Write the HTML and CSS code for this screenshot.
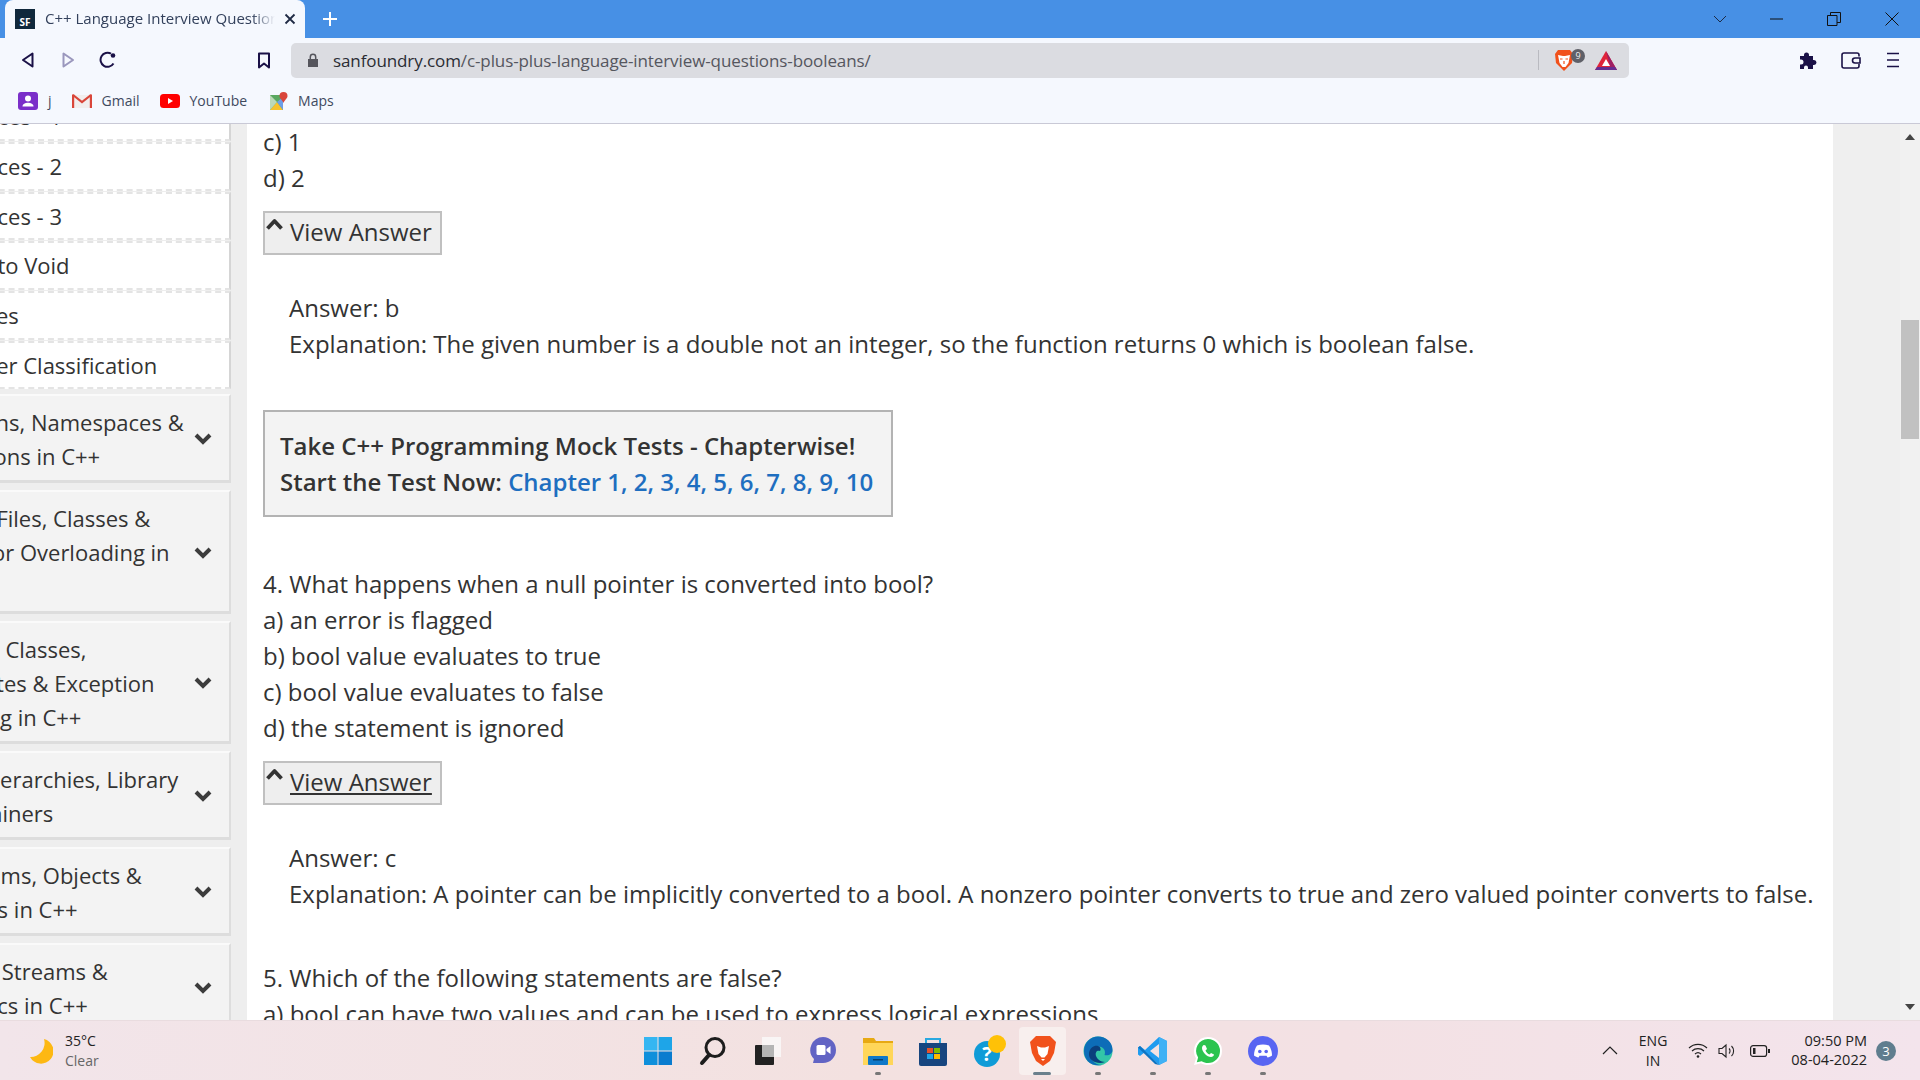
FILE: index.html
```html
<!DOCTYPE html>
<html>
<head>
    <title>C++ Language Interview Questions - Booleans</title>
    <link rel="stylesheet" href="styles.css">
</head>
<body>

<div class="tabbar">
    <div class="tab">
        <span class="favicon">SF</span>
        <span class="tab-title">C++ Language Interview Questions</span>
        <svg class="tab-close" width="12" height="12" viewBox="0 0 12 12"><path d="M1.5 1.5l9 9M10.5 1.5l-9 9" stroke="#1f2a44" stroke-width="1.8"/></svg>
    </div>
    <svg class="new-tab" width="16" height="16" viewBox="0 0 16 16"><path d="M8 1v14M1 8h14" stroke="#fff" stroke-width="2"/></svg>
    <div class="window-btns">
        <svg width="14" height="8" viewBox="0 0 14 8"><path d="M1 1l6 6 6-6" fill="none" stroke="#1c2b45" stroke-width="1"/></svg>
        <svg width="14" height="2" viewBox="0 0 14 2"><path d="M0 1h13" stroke="#111" stroke-width="1"/></svg>
        <svg width="14" height="14" viewBox="0 0 14 14"><path d="M.5 3.5h9.500v10h-9.500zM3.500 3.500v-3h10v10h-3.500" fill="none" stroke="#111" stroke-width="1"/></svg>
        <svg width="14" height="14" viewBox="0 0 14 14"><path d="M.5.5l13 13M13.500.5l-13 13" stroke="#111" stroke-width="1"/></svg>
    </div>
</div>

<div class="toolbar">
    <svg class="btn-back" width="14" height="16" viewBox="0 0 14 16"><path d="M11.500 1.500v13L2 8z" fill="none" stroke="#1a1147" stroke-width="2" stroke-linejoin="round"/></svg>
    <svg class="btn-forward" width="14" height="16" viewBox="0 0 14 16"><path d="M2.500 1.500v13L12 8z" fill="none" stroke="#9a97bd" stroke-width="2" stroke-linejoin="round"/></svg>
    <svg class="btn-reload" width="18" height="18" viewBox="0 0 18 18"><path d="M14.500 12.500A7 7 0 1 1 12 2.700" fill="none" stroke="#1a1147" stroke-width="2"/><circle cx="14" cy="4.500" r="2.300" fill="#1a1147"/></svg>
    <svg class="btn-mark" width="14" height="17" viewBox="0 0 14 17"><path d="M2 1.500h10v14l-5-4-5 4z" fill="none" stroke="#1a1147" stroke-width="2" stroke-linejoin="round"/></svg>
    <div class="address">
        <svg class="lock" width="12" height="14" viewBox="0 0 12 14"><path d="M1 6h10v8H1z" fill="#55555c"/><path d="M3.300 6V4a2.700 2.700 0 0 1 5.400 0v2" fill="none" stroke="#55555c" stroke-width="1.500"/></svg>
        <span class="url">sanfoundry.com<span class="url-path">/c-plus-plus-language-interview-questions-booleans/</span></span>
        <span class="addr-sep"></span>
        <span class="shield">
            <svg width="20" height="23" viewBox="0 0 20 23"><path d="M4 1h12l3 4-1 9-8 8-8-8-1-9z" fill="#f1511b"/><path d="M4 6l5 1h2l5-1-1.500 8-3 4h-3l-3-4z" fill="#fff"/><path d="M6 10h2.500M11.500 10H14M10 12v3" stroke="#f1511b" stroke-width="1.200"/></svg>
            <span class="shield-count">9</span>
        </span>
        <svg class="bat" width="24" height="21" viewBox="0 0 24 21"><path d="M12 1L1 20h22z" fill="#e0243a"/><path d="M12 1L23 20h-6z" fill="#9e1f63"/><path d="M1 20h22l-2-3H3z" fill="#662d91"/><path d="M12 9l-4 7h8z" fill="#fff"/></svg>
    </div>
    <svg class="btn-puzzle" width="18" height="18" viewBox="0 0 18 18"><path d="M1 5h4V4a2.500 2.500 0 0 1 5 0v1h4v4h1a2.500 2.500 0 0 1 0 5h-1v4H9v-1.500a2 2 0 0 0-4 0V18H1v-4.500h1a2.500 2.500 0 0 0 0-5H1z" fill="#1a1147"/></svg>
    <svg class="btn-wallet" width="20" height="17" viewBox="0 0 20 17"><path d="M18 4.500V3a2 2 0 0 0-2-2H3a2 2 0 0 0-2 2v11a2 2 0 0 0 2 2h13a2 2 0 0 0 2-2v-2" fill="none" stroke="#1a1147" stroke-width="1.600"/><path d="M19 6h-5a2.200 2.200 0 0 0 0 5h5z" fill="none" stroke="#1a1147" stroke-width="1.600"/></svg>
    <svg class="btn-menu" width="12" height="16" viewBox="0 0 12 16"><path d="M0 1.500h12M0 8h12M0 14.500h12" stroke="#1a1147" stroke-width="1.600"/></svg>
</div>

<div class="bookmarks">
    <span class="mark mark-j">
        <svg width="20" height="18" viewBox="0 0 20 18"><rect width="20" height="18" rx="3" fill="#7b2fc9"/><circle cx="10" cy="6.500" r="3" fill="#fff"/><path d="M4.500 14.500c0-5 11-5 11 0z" fill="#fff"/></svg>
        j
    </span>
    <span class="mark mark-gmail">
        <svg width="20" height="15" viewBox="0 0 20 15"><path d="M1 2h18v13H1z" fill="#f1eeee"/><path d="M1 2l9 7 9-7" fill="none" stroke="#d9463a" stroke-width="2.200"/><path d="M1 1.500V15M19 1.500V15" stroke="#d9463a" stroke-width="2.400"/></svg>
        Gmail
    </span>
    <span class="mark mark-yt">
        <svg width="20" height="14" viewBox="0 0 20 14"><rect width="20" height="14" rx="3.500" fill="#f00"/><path d="M8 4l5 3-5 3z" fill="#fff"/></svg>
        YouTube
    </span>
    <span class="mark mark-maps">
        <svg width="18" height="18" viewBox="0 0 18 18"><path d="M0 3h13v15H0z" fill="#5aa860"/><path d="M0 18l7-8 6 8z" fill="#f6c22d"/><path d="M0 3l7 7-7 8z" fill="#bcd9b8"/><path d="M7 10l6-5v13z" fill="#6d9ee8"/><path d="M13.500 0a4 4 0 0 1 4 4c0 2.500-3 4-4 7-1-3-4-4.500-4-7a4 4 0 0 1 4-4z" fill="#d9453a"/></svg>
        Maps
    </span>
</div>

<div class="main">
    <div class="sidebar">
        <div class="side-inner">
            <div class="side-link">References - 1</div>
            <div class="side-link">References - 2</div>
            <div class="side-link">References - 3</div>
            <div class="side-link">Pointer to Void</div>
            <div class="side-link">Attributes</div>
            <div class="side-link last">Character Classification</div>

            <div class="side-group">Functions, Namespaces &amp;<br>Exceptions in C++<svg class="chev" width="18" height="12" viewBox="0 0 18 12"><path d="M2 2l7 7 7-7" fill="none" stroke="#3c3c3c" stroke-width="4"/></svg></div>
            <div class="side-group tall">Source Files, Classes &amp;<br>Operator Overloading in<br>&nbsp;<svg class="chev" width="18" height="12" viewBox="0 0 18 12"><path d="M2 2l7 7 7-7" fill="none" stroke="#3c3c3c" stroke-width="4"/></svg></div>
            <div class="side-group tall">Derived Classes,<br>Templates &amp; Exception<br>Handling in C++<svg class="chev" width="18" height="12" viewBox="0 0 18 12"><path d="M2 2l7 7 7-7" fill="none" stroke="#3c3c3c" stroke-width="4"/></svg></div>
            <div class="side-group">Class Hierarchies, Library<br>&amp; Containers<svg class="chev" width="18" height="12" viewBox="0 0 18 12"><path d="M2 2l7 7 7-7" fill="none" stroke="#3c3c3c" stroke-width="4"/></svg></div>
            <div class="side-group">Algorithms, Objects &amp;<br>Iterators in C++<svg class="chev" width="18" height="12" viewBox="0 0 18 12"><path d="M2 2l7 7 7-7" fill="none" stroke="#3c3c3c" stroke-width="4"/></svg></div>
            <div class="side-group">Strings, Streams &amp;<br>Numerics in C++<svg class="chev" width="18" height="12" viewBox="0 0 18 12"><path d="M2 2l7 7 7-7" fill="none" stroke="#3c3c3c" stroke-width="4"/></svg></div>
        </div>
    </div>

    <div class="gutter"></div>

    <div class="content">
        <p>c) 1<br>d) 2</p>
        <div class="answer-btn"><svg class="caret" width="17" height="13" viewBox="0 0 17 13"><path d="M1.500 11.500L8.500 4l7 7.500" fill="none" stroke="#333" stroke-width="3.800" stroke-linejoin="round"/></svg><span>View Answer</span></div>
        <p class="answer">Answer: b<br>Explanation: The given number is a double not an integer, so the function returns 0 which is boolean false.</p>

        <div class="mock">
            Take C++ Programming Mock Tests - Chapterwise!<br>
            Start the Test Now: <a href="#">Chapter 1, 2, 3, 4, 5, 6, 7, 8, 9, 10</a>
        </div>

        <p class="question">4. What happens when a null pointer is converted into bool?<br>
        a) an error is flagged<br>
        b) bool value evaluates to true<br>
        c) bool value evaluates to false<br>
        d) the statement is ignored</p>
        <div class="answer-btn"><svg class="caret" width="17" height="13" viewBox="0 0 17 13"><path d="M1.500 11.500L8.500 4l7 7.500" fill="none" stroke="#333" stroke-width="3.800" stroke-linejoin="round"/></svg><span class="hovered">View Answer</span></div>
        <p class="answer">Answer: c<br>Explanation: A pointer can be implicitly converted to a bool. A nonzero pointer converts to true and zero valued pointer converts to false.</p>

        <p class="question next">5. Which of the following statements are false?<br>
        a) bool can have two values and can be used to express logical expressions.</p>
    </div>

    <div class="right-rail"></div>

    <div class="scrollbar">
        <svg class="arrow-up" width="10" height="6" viewBox="0 0 10 6"><path d="M5 0l5 6H0z" fill="#444"/></svg>
        <div class="thumb"></div>
        <svg class="arrow-down" width="10" height="6" viewBox="0 0 10 6"><path d="M5 6L0 0h10z" fill="#444"/></svg>
    </div>
</div>

<div class="taskbar">
    <div class="weather">
        <svg width="24" height="26" viewBox="0 0 24 26"><path d="M15 1A12.500 12.500 0 1 1 1 19 14 14 0 0 0 15 1z" fill="#fdb813"/></svg>
        <div class="weather-text"><div>35°C</div><div class="weather-sub">Clear</div></div>
    </div>

    <div class="task-icons">
        <span class="task"><svg width="30" height="30" viewBox="0 0 30 30"><path d="M1 1h13.500v13.500H1z" fill="#35b6f2"/><path d="M15.500 1H29v13.500H15.500z" fill="#1ea5e8"/><path d="M1 15.500h13.500V29H1z" fill="#0f8fdb"/><path d="M15.500 15.500H29V29H15.500z" fill="#0a7ccf"/></svg></span>
        <span class="task"><svg width="28" height="30" viewBox="0 0 28 30"><circle cx="16" cy="11.500" r="9" fill="none" stroke="#1c1c1c" stroke-width="3"/><path d="M10 19l-7 8" stroke="#1c1c1c" stroke-width="4" stroke-linecap="round"/></svg></span>
        <span class="task"><svg width="26" height="28" viewBox="0 0 26 28"><rect x="7" y="0" width="19" height="20" fill="#f9f5f5"/><rect y="8" width="19" height="20" rx="1" fill="#222"/><rect x="7" y="8" width="12" height="12" fill="#b5b5b5"/></svg></span>
        <span class="task"><svg width="28" height="30" viewBox="0 0 28 30"><path d="M14 1a13 13 0 0 1 0 26H4l1-4A13 13 0 0 1 14 1z" fill="#6264c4"/><rect x="7.500" y="9" width="9" height="10" rx="1.500" fill="#fff"/><path d="M17.500 13l4-3v8l-4-3z" fill="#fff"/></svg></span>
        <span class="task on"><svg width="30" height="28" viewBox="0 0 30 28"><path d="M0 1h11l2 3h17v24H0z" fill="#e7a913"/><path d="M0 6h30v22H0z" fill="#ffd659"/><rect x="5" y="19" width="20" height="9" rx="1" fill="#0f78c8"/><rect x="10" y="22" width="10" height="1.500" fill="#07406e"/></svg></span>
        <span class="task"><svg width="28" height="30" viewBox="0 0 28 30"><path d="M7 8V3h14v5" fill="none" stroke="#29a8e0" stroke-width="2"/><path d="M0 7h28v21a2 2 0 0 1-2 2H2a2 2 0 0 1-2-2z" fill="#17457f"/><path d="M8 12h6v5H8z" fill="#e8512a"/><path d="M15 12h6v5h-6z" fill="#7fba00"/><path d="M8 18h6v5H8z" fill="#1ea5e8"/><path d="M15 18h6v5h-6z" fill="#ffb900"/></svg></span>
        <span class="task help"><svg width="34" height="34" viewBox="0 0 34 34"><circle cx="14" cy="20" r="13" fill="#0f9bd7"/><text x="14" y="27" class="help-mark">?</text><circle cx="24" cy="10" r="9" fill="#ffc107"/></svg></span>
        <span class="task current"><svg width="26" height="32" viewBox="0 0 26 32"><path d="M6 1h14l3 3 3 3-2 11-4 8-7 5-7-5-4-8L0 7l3-3z" fill="#f1511b"/><path d="M7 11l4 1.500h4L19 11l-1.500 8-3 3.500h-3l-3-3.500z" fill="#fff"/><path d="M11 24h4l-2 2z" fill="#fff"/></svg></span>
        <span class="task on"><svg width="30" height="30" viewBox="0 0 30 30"><circle cx="15" cy="15" r="14.500" fill="#32c5a8"/><path d="M1 15C1 6 8 .5 15 .5 23 .5 29.500 6 29.500 14c0 4-4 6-8 5 2-6-3-9-7-8C8 12 6 18 9 24c2 3 6 5 10 5C8 31 1 24 1 15z" fill="#0d6db8"/><path d="M6 17c1-6 6-8 9-7 3 1 3 4 2 5-3-1-5 1-4 5 1 3 5 6 9 6-7 3-17-1-16-9z" fill="#0b3f7d"/></svg></span>
        <span class="task on"><svg width="30" height="30" viewBox="0 0 30 30"><path d="M21 1l8 4v20l-8 4L7 16l-5 4-2-1.500V11.500L2 10l5 4z" fill="#1f9cf0"/><path d="M21 1l8 4v20l-8 4z" fill="#3fb1f5"/><path d="M21 8v14l-9-7z" fill="#f3e2e2"/><path d="M0 11.500L2 10l19 19-4-1z" fill="#0e74c2"/></svg></span>
        <span class="task on"><svg width="30" height="30" viewBox="0 0 30 30"><path d="M15 1a14 14 0 0 1 0 28c-2.500 0-5-.6-7-1.800L1 29l2-6.800A14 14 0 0 1 15 1z" fill="#fff"/><path d="M15 3a12 12 0 0 1 0 24c-2.300 0-4.500-.7-6.300-1.800L3.800 26.300l1.300-4.700A12 12 0 0 1 15 3z" fill="#2cc44f"/><path d="M11 9c-1 0-2 1.500-2 3 0 4 5 9 9 9 1.500 0 3-1 3-2.500l-3-1.500-1.500 1.500c-1.500-.5-3.500-2.500-4-4L14 13l-1.500-3.500z" fill="#fff"/></svg></span>
        <span class="task on"><svg width="30" height="30" viewBox="0 0 30 30"><circle cx="15" cy="15" r="15" fill="#5865f2"/><path d="M9 9.500c4-1.500 8-1.500 12 0 2 3 3 6 3 10-1.500 1-3 1.800-4.500 2l-1-1.800h-7l-1 1.800c-1.500-.2-3-1-4.500-2 0-4 1-7 3-10z" fill="#fff"/><circle cx="11.800" cy="15.500" r="1.800" fill="#5865f2"/><circle cx="18.200" cy="15.500" r="1.800" fill="#5865f2"/></svg></span>
    </div>

    <div class="tray">
        <svg class="tray-up" width="16" height="9" viewBox="0 0 16 9"><path d="M1 8l7-7 7 7" fill="none" stroke="#222" stroke-width="1.200"/></svg>
        <div class="lang">ENG<br>IN</div>
        <svg class="tray-wifi" width="20" height="15" viewBox="0 0 20 15"><path d="M1 5a13 13 0 0 1 18 0M4 8a9 9 0 0 1 12 0M7 11a4.500 4.500 0 0 1 6 0" fill="none" stroke="#222" stroke-width="1.200"/><circle cx="10" cy="13.500" r="1.300" fill="#222"/></svg>
        <svg class="tray-vol" width="20" height="16" viewBox="0 0 20 16"><path d="M1 5.500h3L8 2v12l-4-3.500H1z" fill="none" stroke="#222" stroke-width="1.100"/><path d="M11 5.500a3.500 3.500 0 0 1 0 5M13.500 3a7 7 0 0 1 0 10" fill="none" stroke="#222" stroke-width="1.100"/></svg>
        <svg class="tray-bat" width="20" height="12" viewBox="0 0 20 12"><rect x=".6" y=".6" width="16" height="10.800" rx="2.500" fill="none" stroke="#222" stroke-width="1.200"/><rect x="3" y="3" width="2.500" height="6" fill="#222"/><rect x="18" y="4" width="2" height="4" fill="#222"/></svg>
        <div class="clock">09:50 PM<br>08-04-2022</div>
        <span class="notif">3</span>
    </div>
</div>

</body>
</html>
```

FILE: styles.css
```css
* {
    box-sizing: border-box;
}
html, body {
    margin: 0;
    padding: 0;
    height: 1080px;
    overflow: hidden;
    font-family: "Open Sans", sans-serif;
}

/* browser frame */
.tabbar {
    height: 38px;
    background-color: #4790e5;
    display: flex;
    align-items: flex-end;
    padding-left: 5px;
}
.tab {
    width: 300px;
    height: 38px;
    background-color: #f5f8fe;
    border-radius: 8px 8px 0 0;
    display: flex;
    align-items: center;
    padding-left: 10px;
    color: #33415c;
    font-size: 15px;
}
.favicon {
    width: 20px;
    height: 20px;
    flex: none;
    background-color: #10283c;
    color: #fff;
    font-size: 10px;
    font-weight: 700;
    text-align: center;
    line-height: 26px;
}
.tab-title {
    width: 230px;
    margin: 0 0 2px 10px;
    white-space: nowrap;
    overflow: hidden;
    -webkit-mask-image: linear-gradient(to right, #000 90%, transparent);
    mask-image: linear-gradient(to right, #000 90%, transparent);
}
.tab-close {
    margin-left: 9px;
}
.new-tab {
    margin: 0 0 11px 17px;
}
.window-btns {
    margin-left: auto;
    width: 240px;
    height: 38px;
    display: flex;
    align-items: center;
}
.window-btns svg:nth-child(1) { margin-left: 33px; }
.window-btns svg:nth-child(2) { margin-left: 43px; }
.window-btns svg:nth-child(3) { margin-left: 43px; }
.window-btns svg:nth-child(4) { margin-left: 44px; }

.toolbar {
    height: 44px;
    background-color: #f5f8fe;
    display: flex;
    align-items: center;
}
.btn-back { margin-left: 21px; }
.btn-forward { margin-left: 26px; }
.btn-reload { margin-left: 24px; }
.btn-mark { margin-left: 140px; }
.address {
    width: 1338px;
    height: 35px;
    margin-left: 20px;
    background-color: #dbdce1;
    border-radius: 5px;
    display: flex;
    align-items: center;
    font-size: 17px;
    color: #2a2c33;
}
.lock {
    margin-left: 16px;
}
.url {
    margin-left: 14px;
    white-space: nowrap;
    letter-spacing: -0.1px;
}
.url-path {
    color: #55565e;
}
.addr-sep {
    width: 1px;
    height: 20px;
    background-color: #b9bac0;
    margin-left: auto;
}
.shield {
    position: relative;
    display: flex;
    margin-left: 15px;
}
.shield-count {
    position: absolute;
    left: 17px;
    top: 0;
    width: 14px;
    height: 14px;
    border-radius: 50%;
    background-color: #5f6068;
    color: #eee;
    font-size: 9px;
    text-align: center;
    line-height: 14px;
}
.bat {
    margin: 0 11px 0 20px;
}
.btn-puzzle { margin-left: 170px; }
.btn-wallet { margin-left: 24px; }
.btn-menu { margin-left: 26px; }

.bookmarks {
    height: 42px;
    padding-bottom: 4px;
    background-color: #f5f8fe;
    border-bottom: 1px solid #c9c9d6;
    display: flex;
    align-items: center;
    font-size: 14px;
    color: #3f4a5e;
}
.mark {
    display: flex;
    align-items: center;
    gap: 10px;
}
.mark-j { margin-left: 18px; }
.mark-gmail { margin-left: 20px; }
.mark-yt { margin-left: 20px; }
.mark-maps { margin-left: 23px; }

/* page */
.main {
    height: 896px;
    display: flex;
    overflow: hidden;
    background-color: #fff;
}
.sidebar {
    width: 231px;
    flex: none;
    overflow: hidden;
    background-color: #eee;
    font-size: 22px;
    color: #333;
}
.side-inner {
    margin: -31.7px 0 0 -80px;
    width: 311px;
    white-space: nowrap;
}
.side-link {
    height: 48.7px;
    line-height: 45px;
    margin-bottom: 1px;
    text-indent: -3px;
    background-color: #fff;
    border-top: 2px dashed #e4e4e4;
    border-bottom: 2px dashed #e4e4e4;
    border-right: 2px solid #d5d5d5;
}
.side-link.last {
    margin-bottom: 5px;
}
.side-group {
    position: relative;
    height: 89px;
    margin-bottom: 7px;
    padding-top: 9px;
    line-height: 34px;
    background-color: #f3f3f3;
    border-top: 2px solid #fafafa;
    border-right: 2px solid #ddd;
    border-bottom: 3px solid #ddd;
}
.side-group.tall {
    height: 123.5px;
}
.chev {
    position: absolute;
    right: 17px;
    top: 50%;
    margin-top: -5px;
}

.gutter {
    width: 16px;
    flex: none;
    background-color: #eee;
}
.content {
    width: 1586px;
    flex: none;
    padding-left: 16px;
    font-size: 24px;
    line-height: 36px;
    color: #333;
    white-space: nowrap;
}
.content p {
    margin: 0;
}
.answer-btn {
    width: 179px;
    height: 44px;
    margin-top: 15px;
    background-color: #eee;
    border: 2px solid #c0c0c0;
    position: relative;
    padding-left: 25px;
    line-height: 37px;
    color: #333;
}
.caret {
    position: absolute;
    left: 1px;
    top: 4px;
}
.hovered {
    text-decoration: underline;
}
.content .answer {
    margin-top: 35px;
    padding-left: 26px;
}
.mock {
    width: 630px;
    height: 107px;
    margin-top: 48px;
    padding: 16px 0 0 15px;
    background-color: #f3f3f3;
    border: 2px solid #b3b3b3;
    font-weight: 600;
}
.mock a {
    color: #1e6ec0;
    text-decoration: none;
    font-weight: 600;
}
.content .question {
    margin-top: 49px;
}
.content .question.next {
    margin-top: 48px;
}
.right-rail {
    width: 67px;
    flex: none;
    background-color: #efefef;
}
.scrollbar {
    width: 20px;
    flex: none;
    background-color: #f1f1f1;
    position: relative;
}
.arrow-up {
    position: absolute;
    left: 5px;
    top: 10px;
}
.arrow-down {
    position: absolute;
    left: 5px;
    bottom: 10px;
}
.thumb {
    position: absolute;
    left: 1px;
    top: 196px;
    width: 18px;
    height: 119px;
    background-color: #c1c1c1;
}

/* windows taskbar */
.taskbar {
    height: 60px;
    position: relative;
    display: flex;
    align-items: center;
    justify-content: center;
    background: linear-gradient(to right, #f2e5ea, #f3e1e0 45%, #f3e1e4 70%, #f3e4ec);
    border-top: 1px solid #e9dcdf;
}
.weather {
    position: absolute;
    left: 29px;
    top: 0;
    height: 59px;
    display: flex;
    align-items: center;
    gap: 12px;
    font-size: 14px;
    line-height: 20px;
    color: #222;
}
.weather-sub {
    color: #666;
}
.task-icons {
    display: flex;
}
.task {
    width: 55px;
    height: 48px;
    display: flex;
    align-items: center;
    justify-content: center;
    position: relative;
}
.task.on::after, .task.current::after {
    content: "";
    position: absolute;
    bottom: 0;
    left: 25px;
    width: 6px;
    height: 3px;
    border-radius: 2px;
    background-color: #777;
}
.task.help {
    padding-left: 4px;
}
.task.current {
    width: 47px;
    margin: 0 4px;
    background-color: #f8efee;
    border-radius: 4px;
}
.task.current::after {
    left: 14px;
    width: 18px;
    background-color: #6b7f8c;
}
.help-mark {
    fill: #fff;
    font-size: 20px;
    font-weight: 700;
    text-anchor: middle;
}
.tray {
    position: absolute;
    right: 0;
    top: 0;
    height: 59px;
    display: flex;
    align-items: center;
    font-size: 14px;
    line-height: 20px;
    color: #222;
}
.tray-up { margin-right: 21px; }
.lang {
    text-align: center;
    margin-right: 21px;
}
.tray-wifi { margin-right: 10px; }
.tray-vol { margin-right: 12px; }
.tray-bat { margin-right: 21px; }
.clock {
    font-size: 14.5px;
    line-height: 19px;
    margin-bottom: 2px;
    text-align: right;
}
.notif {
    width: 20px;
    height: 20px;
    margin: 0 24px 0 9px;
    border-radius: 50%;
    background-color: #5f7d8e;
    color: #fff;
    font-size: 13px;
    text-align: center;
    line-height: 20px;
}
```
